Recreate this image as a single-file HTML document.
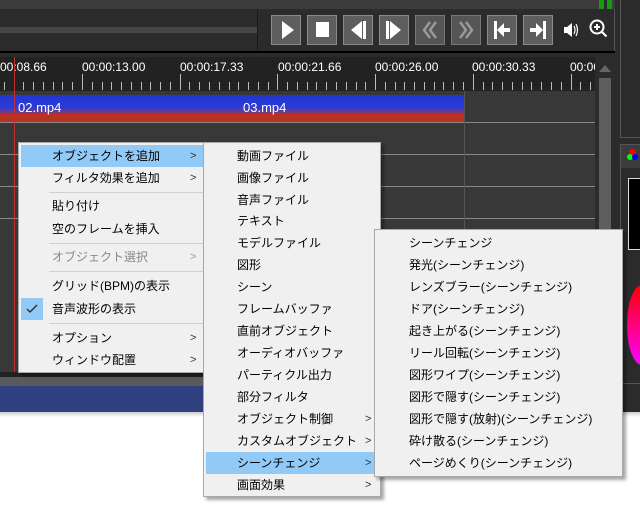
<!DOCTYPE html>
<html><head><meta charset="utf-8"><style>
*{margin:0;padding:0;box-sizing:border-box}
body{width:640px;height:505px;position:relative;overflow:hidden;background:#fff;font-family:"Liberation Sans","Noto Sans CJK JP",sans-serif;font-size:12px}
.a{position:absolute}
.btn{position:absolute;top:15px;width:30px;height:30px;background:#5e5e5e;border:1px solid #8a8a8a}
.btn svg{position:absolute;left:3px;top:0}
.menu{position:absolute;background:#f0f0f0;border:1px solid #a8a8a8;box-shadow:3px 3px 3px rgba(0,0,0,.35)}
.it{position:absolute;height:22px;line-height:22px;color:#000;white-space:nowrap}
.ar{position:absolute;font-size:11px;color:#333;line-height:22px;height:22px}
.sep{position:absolute;height:1px;background:#d0d0d0}
.tl{position:absolute;color:#fff;font-size:12px;top:60px}
</style></head><body>
<!-- top area -->
<div class="a" style="left:0;top:0;width:640px;height:9px;background:#3c3c3c"></div>
<div class="a" style="left:0;top:9px;width:615px;height:43px;background:#2b2b2b"></div>
<div class="a" style="left:0;top:27px;width:257px;height:6px;background:#474747"></div>
<div class="a" style="left:257px;top:9px;width:1px;height:43px;background:#1a1a1a"></div>
<div class="a" style="left:599px;top:0;width:13px;height:9px;background:#10a010"></div>
<div class="a" style="left:604px;top:0;width:3px;height:9px;background:#2b2b2b"></div>
<div class="a" style="left:614px;top:9px;width:1px;height:43px;background:#555"></div>
<div class="a" style="left:0;top:51px;width:615px;height:2px;background:#000"></div>
<div class="a" style="left:0;top:53px;width:615px;height:4px;background:#2b2b2b"></div>
<div class="btn" style="left:271px"><svg width="22" height="28"><path d="M7 5v18l12-9z" fill="#fff"/></svg></div>
<div class="btn" style="left:307px"><svg width="22" height="28"><rect x="5" y="6" width="13" height="15" fill="#fff"/></svg></div>
<div class="btn" style="left:343px"><svg width="22" height="28"><path d="M15 5v18L4 14z" fill="#fff"/><rect x="16" y="5" width="3" height="18" fill="#fff"/></svg></div>
<div class="btn" style="left:379px"><svg width="22" height="28"><rect x="3" y="5" width="3" height="18" fill="#fff"/><path d="M7 5v18l11-9z" fill="#fff"/></svg></div>
<div class="btn" style="left:415px;background:#555;border-color:#777"><svg width="22" height="28"><path d="M11 6l-6 8 6 8M17 6l-6 8 6 8" stroke="#999" stroke-width="2.5" fill="none"/></svg></div>
<div class="btn" style="left:451px;background:#555;border-color:#777"><svg width="22" height="28"><path d="M5 6l6 8-6 8M11 6l6 8-6 8" stroke="#999" stroke-width="2.5" fill="none"/></svg></div>
<div class="btn" style="left:487px"><svg width="22" height="28"><rect x="3" y="5" width="3" height="18" fill="#fff"/><path d="M6 14l7-7v5h6v4h-6v5z" fill="#fff"/></svg></div>
<div class="btn" style="left:523px"><svg width="22" height="28"><rect x="16" y="5" width="3" height="18" fill="#fff"/><path d="M16 14l-7-7v5H3v4h6v5z" fill="#fff"/></svg></div>
<svg class="a" style="left:562px;top:20px" width="20" height="20"><path d="M2 7h3l5-4v14l-5-4H2z" fill="#fff"/><path d="M12 6q2 4 0 8M14 4q3 6 0 12" stroke="#fff" stroke-width="1.2" fill="none"/></svg>
<svg class="a" style="left:588px;top:18px" width="22" height="22"><circle cx="9" cy="9" r="6.5" stroke="#fff" stroke-width="2" fill="none"/><path d="M6 9h6M9 6v6M13.5 13.5l5 5" stroke="#fff" stroke-width="2"/></svg>
<!-- right panel -->
<div class="a" style="left:615px;top:0;width:25px;height:412px;background:#2b2b2b"></div>
<div class="a" style="left:620px;top:-1px;width:21px;height:139px;border:1px solid #555;background:#2b2b2b"></div>
<div class="a" style="left:620px;top:144px;width:21px;height:240px;background:#3c3c3c;border:1px solid #555"></div>
<div class="a" style="left:621px;top:168px;width:19px;height:215px;background:#2b2b2b"></div>
<div class="a" style="left:629px;top:149px;width:7px;height:7px;border-radius:50%;background:#f00"></div>
<div class="a" style="left:627px;top:154px;width:6px;height:6px;border-radius:50%;background:#0f0"></div>
<div class="a" style="left:632px;top:154px;width:6px;height:6px;border-radius:50%;background:#00f"></div>
<div class="a" style="left:628px;top:178px;width:13px;height:72px;background:#000;border:1px solid #ddd"></div>
<div class="a" style="left:627px;top:285px;width:30px;height:80px;border-radius:50%;background:linear-gradient(#f00,#f0f)"></div>
<!-- timeline -->
<div class="a" style="left:0;top:57px;width:595px;height:34px;background:#222"></div>
<div class="a" style="left:0;top:91px;width:595px;height:281px;background:#383838"></div>
<div class="a" style="left:595px;top:57px;width:20px;height:315px;background:#2b2b2b"></div>
<div class="a" style="left:599px;top:78px;width:12px;height:294px;background:#5e5e5e"></div>
<svg class="a" style="left:598px;top:64px" width="14" height="10"><path d="M1 8L7 1l6 7z" fill="#666"/></svg>
<svg class="a" style="left:0;top:57px" width="595" height="34" id="r"></svg>
<script>
(function(){var s='';for(var i=-8;i<60;i++){var x=82+i*9.77;if(x<0||x>594)continue;var maj=(i%10===0);s+='<line x1="'+(Math.round(x)+.5)+'" x2="'+(Math.round(x)+.5)+'" y1="'+(maj?17:25)+'" y2="33" stroke="#bbb"/>';}document.getElementById('r').innerHTML=s;})();
</script>
<div class="tl" style="left:0">00:08.66</div>
<div class="tl" style="left:82px">00:00:13.00</div>
<div class="tl" style="left:180px">00:00:17.33</div>
<div class="tl" style="left:278px">00:00:21.66</div>
<div class="tl" style="left:375px">00:00:26.00</div>
<div class="tl" style="left:472px">00:00:30.33</div>
<div class="tl" style="left:570px;width:25px;overflow:hidden">00:00</div>
<div class="a" style="left:0;top:95px;width:464px;height:27px;background:linear-gradient(#2236d0 0%,#2a3cd8 45%,#6a3a90 62%,#b83222 72%,#b83222 100%)"></div>
<div class="a" style="left:18px;top:100px;color:#fff;font-size:13px">02.mp4</div>
<div class="a" style="left:243px;top:100px;color:#fff;font-size:13px">03.mp4</div>
<div class="a" style="left:0;top:122px;width:595px;height:1px;background:#888"></div>
<div class="a" style="left:0;top:154px;width:595px;height:1px;background:#888"></div>
<div class="a" style="left:0;top:186px;width:595px;height:1px;background:#888"></div>
<div class="a" style="left:0;top:218px;width:595px;height:1px;background:#888"></div>
<div class="a" style="left:464px;top:91px;width:1px;height:281px;background:#555"></div>
<div class="a" style="left:14px;top:57px;width:1px;height:315px;background:#c03030"></div>
<div class="a" style="left:0;top:372px;width:620px;height:5px;background:#222"></div>
<div class="a" style="left:0;top:377px;width:620px;height:9px;background:#5a5a5a"></div>
<div class="a" style="left:0;top:386px;width:620px;height:26px;background:#303f80"></div>
<div class="a" style="left:0;top:412px;width:640px;height:5px;background:linear-gradient(#ccc,#fff)"></div>
<!-- menu 1 -->
<div class="menu" style="left:18px;top:142px;width:186px;height:231px">
<div class="a" style="left:2px;top:2px;width:182px;height:22px;background:#91c9f7"></div>
<div class="it" style="left:33px;top:2px">オブジェクトを追加</div><div class="ar" style="left:171px;top:2px">&gt;</div>
<div class="it" style="left:33px;top:24px">フィルタ効果を追加</div><div class="ar" style="left:171px;top:24px">&gt;</div>
<div class="sep" style="left:30px;top:49px;width:154px"></div>
<div class="it" style="left:33px;top:52px">貼り付け</div>
<div class="it" style="left:33px;top:75px">空のフレームを挿入</div>
<div class="sep" style="left:30px;top:100px;width:154px"></div>
<div class="it" style="left:33px;top:103px;color:#888">オブジェクト選択</div><div class="ar" style="left:171px;top:103px;color:#999">&gt;</div>
<div class="sep" style="left:30px;top:128px;width:154px"></div>
<div class="it" style="left:33px;top:132px">グリッド(BPM)の表示</div>
<div class="a" style="left:2px;top:155px;width:22px;height:22px;background:#91c9f7"></div>
<svg class="a" style="left:7px;top:161px" width="12" height="10"><path d="M1 5l3 3 7-7" stroke="#333" stroke-width="1.5" fill="none"/></svg>
<div class="it" style="left:33px;top:155px">音声波形の表示</div>
<div class="sep" style="left:30px;top:180px;width:154px"></div>
<div class="it" style="left:33px;top:184px">オプション</div><div class="ar" style="left:171px;top:184px">&gt;</div>
<div class="it" style="left:33px;top:206px">ウィンドウ配置</div><div class="ar" style="left:171px;top:206px">&gt;</div>
</div>
<!-- menu 2 -->
<div class="menu" style="left:203px;top:142px;width:178px;height:355px">
<div class="it" style="left:33px;top:2px">動画ファイル</div>
<div class="it" style="left:33px;top:24px">画像ファイル</div>
<div class="it" style="left:33px;top:46px">音声ファイル</div>
<div class="it" style="left:33px;top:67px">テキスト</div>
<div class="it" style="left:33px;top:89px">モデルファイル</div>
<div class="it" style="left:33px;top:111px">図形</div>
<div class="it" style="left:33px;top:133px">シーン</div>
<div class="it" style="left:33px;top:155px">フレームバッファ</div>
<div class="it" style="left:33px;top:177px">直前オブジェクト</div>
<div class="it" style="left:33px;top:199px">オーディオバッファ</div>
<div class="it" style="left:33px;top:221px">パーティクル出力</div>
<div class="it" style="left:33px;top:243px">部分フィルタ</div>
<div class="it" style="left:33px;top:265px">オブジェクト制御</div><div class="ar" style="left:161px;top:265px">&gt;</div>
<div class="it" style="left:33px;top:287px">カスタムオブジェクト</div><div class="ar" style="left:161px;top:287px">&gt;</div>
<div class="a" style="left:2px;top:309px;width:170px;height:22px;background:#91c9f7"></div>
<div class="it" style="left:33px;top:309px">シーンチェンジ</div><div class="ar" style="left:161px;top:309px">&gt;</div>
<div class="it" style="left:33px;top:331px">画面効果</div><div class="ar" style="left:161px;top:331px">&gt;</div>
</div>
<!-- menu 3 -->
<div class="menu" style="left:374px;top:229px;width:249px;height:248px">
<div class="it" style="left:34px;top:2px">シーンチェンジ</div>
<div class="it" style="left:34px;top:24px">発光(シーンチェンジ)</div>
<div class="it" style="left:34px;top:46px">レンズブラー(シーンチェンジ)</div>
<div class="it" style="left:34px;top:68px">ドア(シーンチェンジ)</div>
<div class="it" style="left:34px;top:90px">起き上がる(シーンチェンジ)</div>
<div class="it" style="left:34px;top:112px">リール回転(シーンチェンジ)</div>
<div class="it" style="left:34px;top:134px">図形ワイプ(シーンチェンジ)</div>
<div class="it" style="left:34px;top:156px">図形で隠す(シーンチェンジ)</div>
<div class="it" style="left:34px;top:178px">図形で隠す(放射)(シーンチェンジ)</div>
<div class="it" style="left:34px;top:200px">砕け散る(シーンチェンジ)</div>
<div class="it" style="left:34px;top:222px">ページめくり(シーンチェンジ)</div>
</div>
</body></html>
